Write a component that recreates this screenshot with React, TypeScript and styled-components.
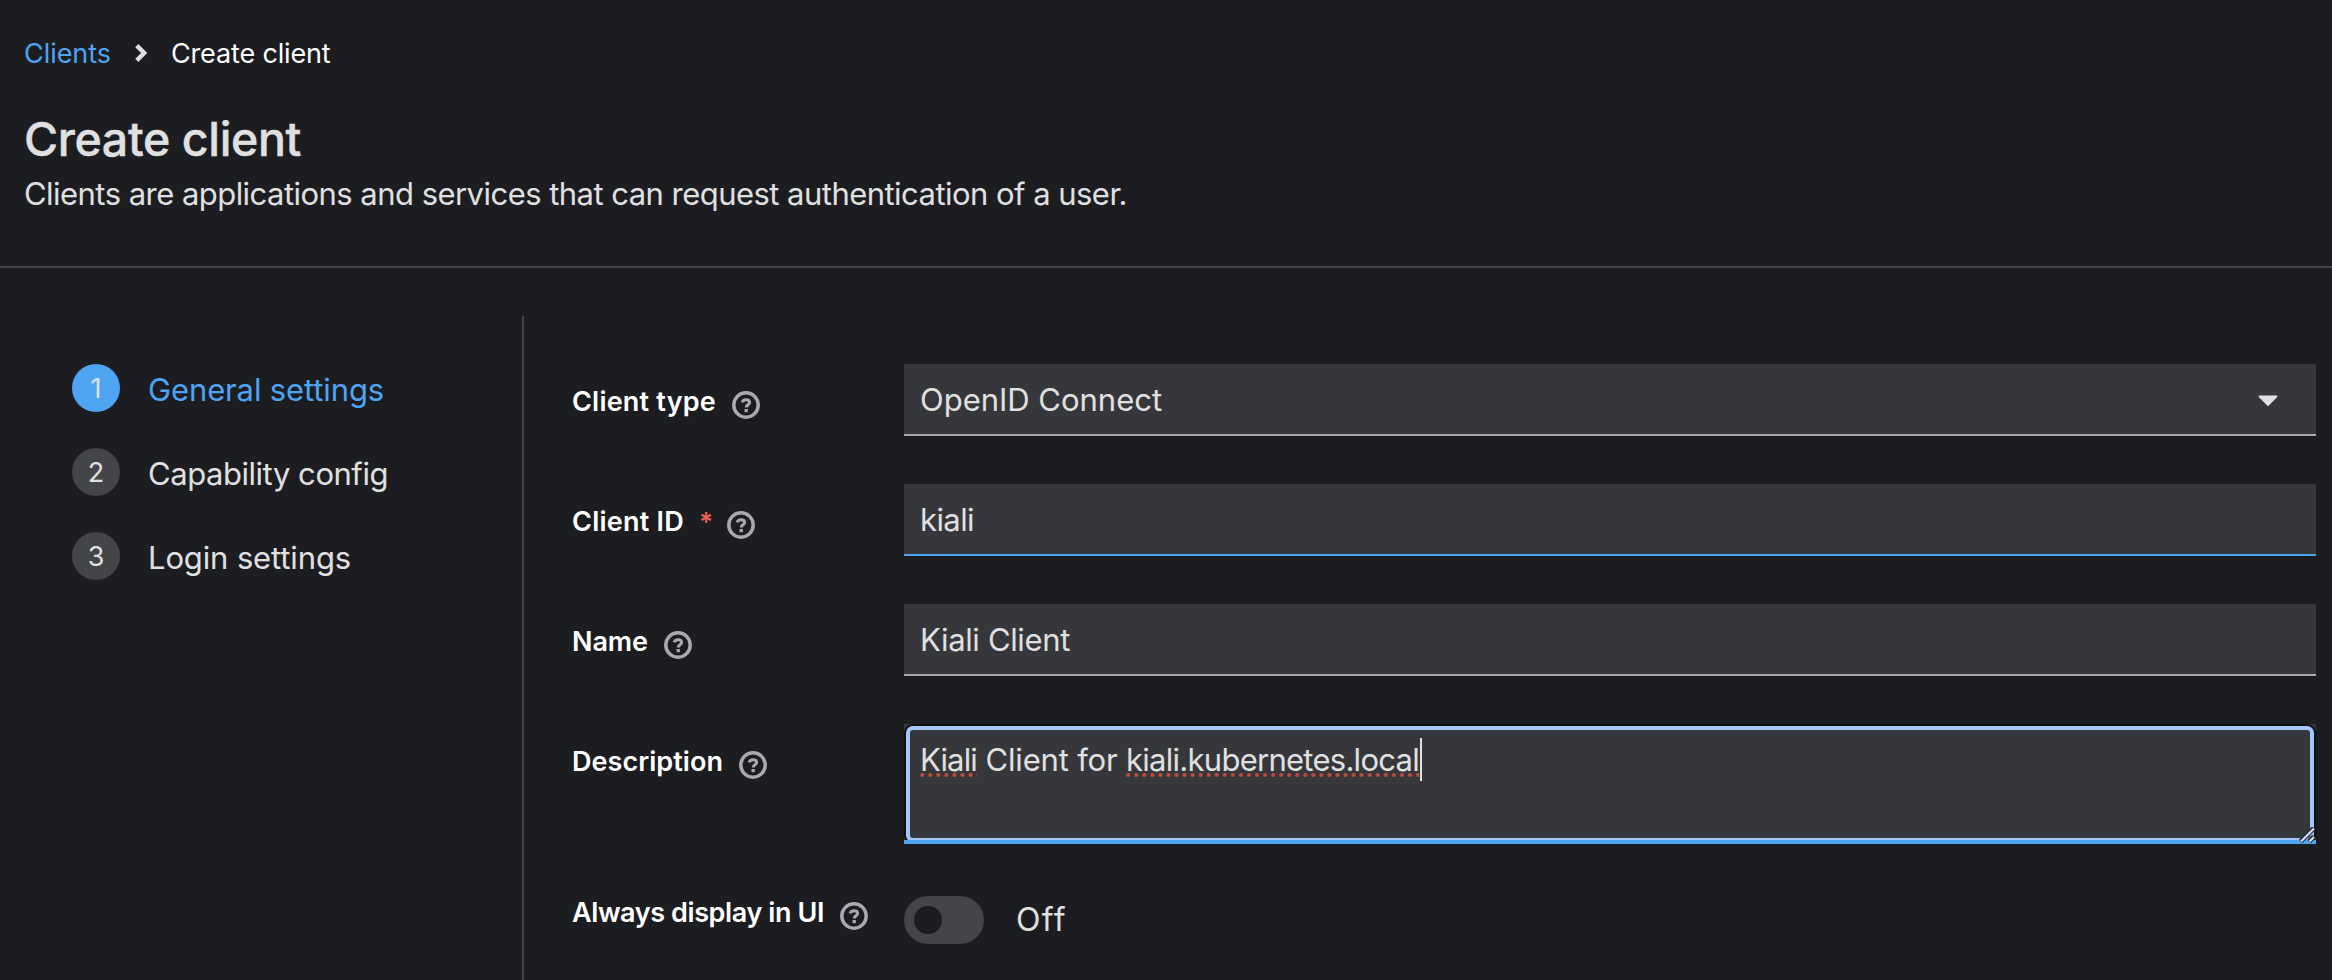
import React, { useLayoutEffect, useRef } from "react";
import styled, { createGlobalStyle } from "styled-components";

const GlobalStyle = createGlobalStyle`
  body { margin: 0; background: #1c1d21; color: #e0e0e0; font-family: Inter, "Liberation Sans", sans-serif; overflow: hidden; }
  *, *::before, *::after { box-sizing: border-box; }
`;

const Page = styled.div`
  display: flex;
  flex-direction: column;
  width: 2332px;
  height: 980px;
  overflow: hidden;
`;

const Header = styled.header`
  height: 268px;
  padding: 32px 24px 0;
  border-bottom: 2px solid #444548;
`;

const Breadcrumb = styled.nav`
  display: flex;
  align-items: center;
  height: 42px;
  font-size: 27px;
`;

const Chevron = styled.svg`
  margin: 0 24px;
`;

const Title = styled.h1`
  margin: 35px 0 0;
  font-size: 46.5px;
  font-weight: 500;
  -webkit-text-stroke: 0.4px #e0e0e0;
  line-height: 60px;
`;

const Subtitle = styled.p`
  margin: 1px 0 0;
  font-size: 31px;
  line-height: 48px;
`;

const Text = styled.span<{ $tone?: string }>`
  display: inline-block;
  white-space: pre;
  color: ${(p) => p.$tone ?? "inherit"};
`;

const Body = styled.div`
  display: flex;
  flex: 1;
  padding-top: 48px;
`;

const Steps = styled.aside`
  display: flex;
  flex-direction: column;
  gap: 36px;
  width: 524px;
  padding: 48px 0 0 72px;
  border-right: 2px solid #444548;
`;

const Step = styled.div<{ $active?: boolean }>`
  display: flex;
  gap: 28px;
  height: 48px;
  font-size: 31px;
  line-height: 51px;
  color: ${(p) => (p.$active ? "#4fa4f2" : "#e0e0e0")};
`;

const StepNumber = styled.span<{ $active?: boolean }>`
  width: 48px;
  height: 48px;
  border-radius: 50%;
  background: ${(p) => (p.$active ? "#4fa4f2" : "#444548")};
  color: #e0e0e0;
  font-size: 27px;
  line-height: 49px;
  text-align: center;
`;

const Form = styled.main`
  display: flex;
  flex: 1;
  flex-direction: column;
  gap: 48px;
  padding: 48px 16px 0 48px;
`;

const Field = styled.div`
  display: grid;
  grid-template-columns: 332px 1fr;
`;

const Label = styled.label`
  display: flex;
  align-items: flex-start;
  padding-top: 17px;
  height: 72px;
  font-size: 27px;
  font-weight: 620;
  line-height: 42px;
  color: #fff;
`;

const SwitchLabel = styled(Label)`
  padding-top: 0;
`;

const Required = styled.span`
  margin: 0 0 0 15px;
  width: 12px;
  font-size: 26px;
  line-height: 42px;
  color: #f0604d;
`;

const Help = styled.svg`
  margin: 10px 0 0 16px;
`;

const Control = styled.div<{ $focus?: boolean }>`
  display: flex;
  align-items: center;
  justify-content: space-between;
  height: 72px;
  padding: 0 38px 0 16px;
  border-bottom: 2px solid ${(p) => (p.$focus ? "#4fa4f2" : "#a9aaac")};
  background: #36373a;
  font-size: 31px;
`;

const Arrow = styled.svg`
  margin-top: 3px;
`;

const Area = styled.div`
  position: relative;
  height: 120px;
  padding: 12px 16px;
  border-bottom: 4px solid #4fa4f2;
  background: #36373a;
  font-size: 31px;
  line-height: 48px;
  display: flex;
  align-items: flex-start;
`;

const FocusRing = styled.span`
  position: absolute;
  inset: 0 0 auto;
  overflow: hidden;
  height: 116px;

  &::before {
    content: "";
    position: absolute;
    inset: 2px 2px -2px;
    border: 4px solid #a3c6fd;
    border-radius: 7px;
    box-shadow: 0 0 0 2px #101010;
  }
`;

const Misspelt = styled.span`
  position: relative;
`;

const Squiggle = styled.svg`
  position: absolute;
  left: 0;
  top: 36px;
  width: 100%;
  height: 6px;
`;

const Caret = styled.span`
  width: 2px;
  height: 43px;
  margin: 2px 0 0 1px;
  background: #e0e0e0;
`;

const Grip = styled.svg`
  position: absolute;
  right: 1px;
  bottom: -3px;
`;

const SwitchRow = styled.div`
  display: flex;
  align-items: center;
  height: 48px;
  margin-top: 4px;
  gap: 32px;
  font-size: 32px;
  line-height: 46px;
`;

const Switch = styled.span`
  display: flex;
  align-items: center;
  width: 80px;
  height: 48px;
  padding-left: 10px;
  border-radius: 24px;
  background: #444548;

  &::before {
    content: "";
    width: 28px;
    height: 28px;
    border-radius: 50%;
    background: #1c1d21;
  }
`;

/** Text tracked so that its advance equals the given width. */
function Fit({ children, width, tone }: { children: string; width: number; tone?: string }) {
  const ref = useRef<HTMLSpanElement>(null);
  useLayoutEffect(() => {
    const el = ref.current!;
    const fit = () => {
      el.style.letterSpacing = "0px";
      const natural = el.getBoundingClientRect().width;
      el.style.letterSpacing = `${(width - natural) / children.length}px`;
    };
    fit();
    document.fonts?.ready.then(fit);
  }, [children, width]);
  return <Text ref={ref} $tone={tone}>{children}</Text>;
}

const HelpIcon = () => (
  <Help width="28" height="28" viewBox="0 0 28 28" fill="none" stroke="#a9aaac">
    <circle cx="14" cy="14" r="12.2" strokeWidth="3.5" />
    <path d="M10.1 11.4C10.7 9.5 12.2 8.7 14 8.7c2.1 0 3.6 1.1 3.6 2.8 0 2.3-3.3 2.4-3.3 4.9" strokeWidth="3.1" />
    <rect x="12.5" y="18" width="3.4" height="3.2" fill="#a9aaac" stroke="none" />
  </Help>
);

const Dots = ({ id }: { id: string }) => (
  <Squiggle>
    <defs>
      <pattern id={id} width="8.05" height="6" patternUnits="userSpaceOnUse">
        <circle cx="2.2" cy="3" r="2.05" fill="#c64a3c" />
      </pattern>
    </defs>
    <rect width="100%" height="6" fill={`url(#${id})`} />
  </Squiggle>
);

const steps: [string, number][] = [
  ["General settings", 236],
  ["Capability config", 240],
  ["Login settings", 203],
];

export default function App() {
  return (
    <Page>
      <GlobalStyle />
      <Header>
        <Breadcrumb>
          <Fit width={87} tone="#4fa4f2">Clients</Fit>
          <Chevron width="12" height="18" viewBox="0 0 12 18" fill="none" stroke="#e0e0e0" strokeWidth="4.4">
            <path d="M1.8 1.6 9.2 9 1.8 16.4" />
          </Chevron>
          <Fit width={159.5} tone="#fff">Create client</Fit>
        </Breadcrumb>
        <Title><Fit width={277}>Create client</Fit></Title>
        <Subtitle>
          <Fit width={1103}>Clients are applications and services that can request authentication of a user.</Fit>
        </Subtitle>
      </Header>
      <Body>
        <Steps>
          {steps.map(([name, width], i) => (
            <Step key={name} $active={i === 0}>
              <StepNumber $active={i === 0}>{i + 1}</StepNumber>
              <Fit width={width}>{name}</Fit>
            </Step>
          ))}
        </Steps>
        <Form>
          <Field>
            <Label><Fit width={144}>Client type</Fit><HelpIcon /></Label>
            <Control>
              <Fit width={242}>OpenID Connect</Fit>
              <Arrow width="20" height="12" viewBox="0 0 20 12" fill="#e0e0e0">
                <path d="M1.2 0.5h17.6q1 .5 .4 1.4L10.6 10.8q-.6.6-1.2 0L.8 1.9Q.2 1 1.2.5z" />
              </Arrow>
            </Control>
          </Field>
          <Field>
            <Label><Fit width={112}>Client ID</Fit><Required>*</Required><HelpIcon /></Label>
            <Control $focus><Fit width={54}>kiali</Fit></Control>
          </Field>
          <Field>
            <Label><Fit width={76}>Name</Fit><HelpIcon /></Label>
            <Control><Fit width={150}>Kiali Client</Fit></Control>
          </Field>
          <Field>
            <Label><Fit width={151}>Description</Fit><HelpIcon /></Label>
            <Area>
              <FocusRing />
              <Misspelt><Fit width={57}>Kiali</Fit><Dots id="dots-a" /></Misspelt>
              <Fit width={149}> Client for </Fit>
              <Misspelt><Fit width={293}>kiali.kubernetes.local</Fit><Dots id="dots-b" /></Misspelt>
              <Caret />
              <Grip width="16" height="16" viewBox="0 0 16 16" fill="none">
                <path d="M1.5 14.5 15 1M10 14.5l5-5" stroke="#26304a" strokeWidth="5" />
                <path d="M2 14.5 15 1.5M10.5 14.5 15 10" stroke="#dfe3ea" strokeWidth="2" />
              </Grip>
            </Area>
          </Field>
          <Field>
            <SwitchLabel><Fit width={252}>Always display in UI</Fit><HelpIcon /></SwitchLabel>
            <SwitchRow><Switch /><Fit width={51}>Off</Fit></SwitchRow>
          </Field>
        </Form>
      </Body>
    </Page>
  );
}
